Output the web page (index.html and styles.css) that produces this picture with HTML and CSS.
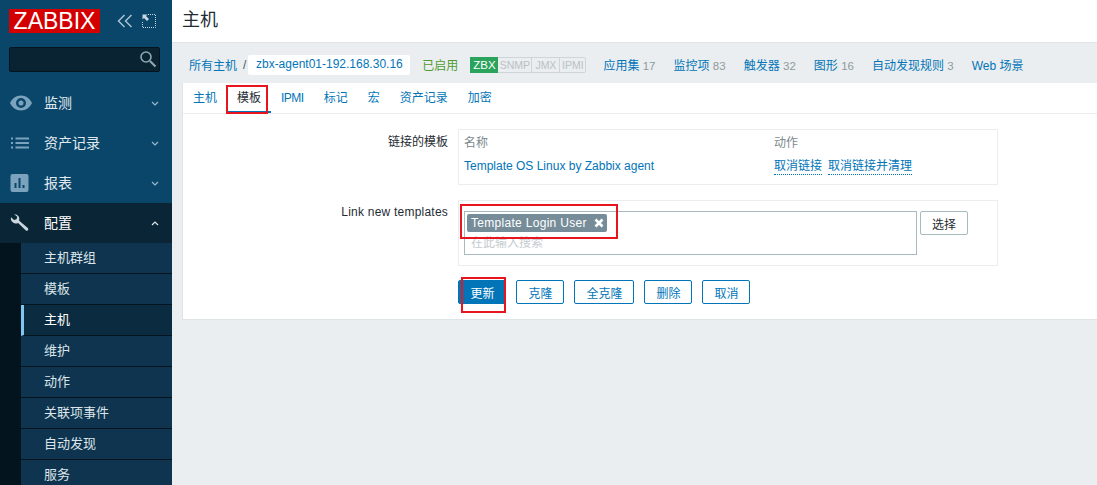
FILE: index.html
```html
<!DOCTYPE html>
<html lang="zh">
<head>
<meta charset="utf-8">
<title>主机</title>
<link rel="stylesheet" href="styles.css">
</head>
<body>
<div class="app">
  <aside class="sidebar">
    <div class="brand">
      <div class="logo">ZABBIX</div>
      <svg class="brand-icon collapse" width="16" height="14" viewBox="0 0 16 14"><path d="M7.500 1 1.500 7l6 6M14.500 1l-6 6 6 6" fill="none" stroke="#a9c1d0" stroke-width="1.500"/></svg>
      <svg class="brand-icon kiosk" width="14" height="14" viewBox="0 0 14 14"><path d="M6 .5h7.500V13.500H.5V7" fill="none" stroke="#c7d6df" stroke-width="1" stroke-dasharray="1 1"/><path d="M.5.5h5L4 2l3 3-2 2-3-3L.500 5.500z" fill="#c7d6df"/></svg>
    </div>
    <div class="search">
      <svg width="18" height="18" viewBox="0 0 18 18"><circle cx="7" cy="7" r="5" fill="none" stroke="#8fa6b3" stroke-width="1.600"/><path d="m11 11 5.500 5.500" stroke="#8fa6b3" stroke-width="2.200"/></svg>
    </div>
    <nav class="menu">
      <div class="menu-row">
        <svg class="menu-icon" width="22" height="16" viewBox="0 0 22 16"><path fill-rule="evenodd" d="M11 .5C6 .5 2 3.500 0 8c2 4.500 6 7.500 11 7.500S20 12.500 22 8C20 3.500 16 .5 11 .5zm0 2.500a5 5 0 1 1 0 10 5 5 0 0 1 0-10zm0 2.500a2.500 2.500 0 1 0 0 5 2.500 2.500 0 0 0 0-5z" fill="#7ba3bd"/></svg>
        <span class="menu-label">监测</span>
        <svg class="chev" width="8" height="5" viewBox="0 0 8 5"><path d="m1 1 3 3 3-3" fill="none" stroke="#9db8c9" stroke-width="1.200"/></svg>
      </div>
      <div class="menu-row">
        <svg class="menu-icon" width="22" height="16" viewBox="0 0 22 16"><path d="M1 2.500h2v2H1zM1 7h2v2H1zM1 11.500h2v2H1zM5.500 2.500H19v2H5.500zM5.500 7H19v2H5.500zM5.500 11.500H19v2H5.500z" fill="#7ba3bd"/></svg>
        <span class="menu-label">资产记录</span>
        <svg class="chev" width="8" height="5" viewBox="0 0 8 5"><path d="m1 1 3 3 3-3" fill="none" stroke="#9db8c9" stroke-width="1.200"/></svg>
      </div>
      <div class="menu-row">
        <svg class="menu-icon" width="22" height="18" viewBox="0 0 22 18"><path fill-rule="evenodd" d="M2 0h14a2 2 0 0 1 2 2v14a2 2 0 0 1-2 2H2a2 2 0 0 1-2-2V2a2 2 0 0 1 2-2zm2 9v5h2V9zm4-5v10h2V4zm4 7v3h2v-3z" fill="#7ba3bd" transform="translate(0.500)"/></svg>
        <span class="menu-label">报表</span>
        <svg class="chev" width="8" height="5" viewBox="0 0 8 5"><path d="m1 1 3 3 3-3" fill="none" stroke="#9db8c9" stroke-width="1.200"/></svg>
      </div>
      <div class="menu-row active">
        <svg class="menu-icon" width="22" height="18" viewBox="0 0 22 18"><path d="M4.500.2a5 5 0 0 1 4.700 6.600l8.600 7.200c1.600 1.600-.5 3.800-2.200 2.300L8.100 8.900A5 5 0 0 1 1 3.200l3.100 2.700 2.500-.7.600-2.400L4.100.2z" fill="#c9d6de"/></svg>
        <span class="menu-label">配置</span>
        <svg class="chev" width="8" height="5" viewBox="0 0 8 5"><path d="m1 4 3-3 3 3" fill="none" stroke="#dfe7ec" stroke-width="1.200"/></svg>
      </div>
      <div class="submenu">
        <div class="sub-item">主机群组</div>
        <div class="sub-item">模板</div>
        <div class="sub-item current">主机</div>
        <div class="sub-item">维护</div>
        <div class="sub-item">动作</div>
        <div class="sub-item">关联项事件</div>
        <div class="sub-item">自动发现</div>
        <div class="sub-item">服务</div>
      </div>
    </nav>
  </aside>

  <main class="main">
    <header class="page-head"><h1 class="page-title">主机</h1></header>
    <div class="content">
      <div class="crumbs">
        <a class="link">所有主机</a>
        <span class="slash">/</span>
        <span class="current-host">zbx-agent01-192.168.30.16</span>
        <span class="enabled">已启用</span>
        <span class="status-group">
          <span class="st on">ZBX</span><span class="st off snmp">SNMP</span><span class="st off jmx">JMX</span><span class="st off ipmi">IPMI</span>
        </span>
        <a class="link nav-item first">应用集 <em>17</em></a>
        <a class="link nav-item">监控项 <em>83</em></a>
        <a class="link nav-item">触发器 <em>32</em></a>
        <a class="link nav-item">图形 <em>16</em></a>
        <a class="link nav-item">自动发现规则 <em>3</em></a>
        <a class="link nav-item">Web 场景</a>
      </div>
      <section class="card">
        <div class="tabs">
          <a class="tab">主机</a>
          <a class="tab selected">模板</a>
          <a class="tab tab-narrow">IPMI</a>
          <a class="tab">标记</a>
          <a class="tab">宏</a>
          <a class="tab">资产记录</a>
          <a class="tab">加密</a>
        </div>
        <div class="form">
          <div class="form-row">
            <div class="form-label label-top">链接的模板</div>
            <div class="panel linked">
              <div class="linked-grid">
                <span class="th">名称</span><span class="th">动作</span>
                <a class="link">Template OS Linux by Zabbix agent</a>
                <span class="actions"><a class="link dotted">取消链接</a><a class="link dotted">取消链接并清理</a></span>
              </div>
            </div>
          </div>
          <div class="form-row second">
            <div class="form-label label-wide">Link new templates</div>
            <div class="panel newtpl">
              <div class="multi">
                <span class="tag">Template Login User
                  <svg class="tag-x" width="10" height="10" viewBox="0 0 10 10"><path d="m1.500 1.500 7 7m0-7-7 7" stroke="#fff" stroke-width="2.600"/></svg>
                </span>
                <div class="placeholder">在此输入搜索</div>
              </div>
              <button class="btn-select" type="button">选择</button>
            </div>
          </div>
          <div class="buttons">
            <button class="btn primary" type="button">更新</button>
            <button class="btn" type="button">克隆</button>
            <button class="btn wide" type="button">全克隆</button>
            <button class="btn" type="button">删除</button>
            <button class="btn" type="button">取消</button>
          </div>
        </div>
      </section>
    </div>
  </main>
  <div class="mark mark-tab"></div>
  <div class="mark mark-tag"></div>
  <div class="mark mark-btn"></div>
</div>
</body>
</html>
```

FILE: styles.css
```css
* { box-sizing: border-box; }
html, body { margin: 0; height: 100%; overflow: hidden; }
body {
  font-family: "Liberation Sans", "Noto Sans CJK SC", sans-serif;
  font-size: 12px;
  color: #1f2c33;
  background: #ebeef0;
}
.app { position: relative; display: flex; width: 1097px; height: 485px; overflow: hidden; }

/* sidebar */
.sidebar { width: 172px; flex: none; background: #0a466a; color: #fff; }
.brand { display: flex; align-items: center; height: 47px; padding: 9px 0 14px 9px; }
.logo {
  width: 91px; height: 24px; background: #d40000; color: #fff;
  font-size: 23px; line-height: 24px; text-align: center;
}
.brand-icon { flex: none; }
.collapse { margin-left: 17px; }
.kiosk { margin-left: 9px; }
.search {
  display: flex; align-items: center; justify-content: flex-end;
  width: 151px; height: 25px; margin: 0 0 0 9px; padding: 0 2px 1px 0;
  background: #0a2332; border: 1px solid #04141e; border-radius: 2px;
}
.menu { margin-top: 11px; }
.menu-row {
  display: flex; align-items: center;
  height: 40px; padding-left: 10px; font-size: 14px; color: #e3eaef;
}
.menu-row.active { background: #0a2535; color: #fff; }
.menu-icon { flex: none; margin-right: 12px; }
.menu-label { flex: 1; margin-top: -2px; }
.chev { flex: none; margin-right: 13px; }
.submenu { background: #04141e; padding-left: 21px; }
.sub-item {
  height: 31px; line-height: 29px; padding-left: 23px;
  background: #0e344f; color: #dce5ea; font-size: 13px;
  border-bottom: 1px solid #04141e;
}
.sub-item.current {
  background: #0a2b40; color: #fff;
  padding-left: 20px; border-left: 3px solid #7fc6f3;
}

/* main */
.main { flex: 1; min-width: 0; }
.page-head {
  height: 43px; background: #fff; border-bottom: 1px solid #dfe4e7;
  padding-left: 10px;
}
.page-title { margin: 0; font-size: 18px; line-height: 41px; font-weight: 400; color: #1f2c33; }
.content { padding-left: 10px; }
.link { color: #0275b8; text-decoration: none; }
.crumbs { display: flex; align-items: center; height: 40px; padding-left: 7px; padding-top: 3px; white-space: nowrap; }
.slash { margin-left: 6px; color: #4a5960; }
.current-host {
  display: block; width: 162px; height: 20px; margin-left: 2px; margin-top: 1px;
  background: #fff; border-radius: 2px; color: #0275b8;
  line-height: 19px; text-align: center;
}
.enabled { margin-left: 12px; color: #4f9c30; }
.status-group { display: flex; margin-left: 12px; height: 16px; margin-top: 1px; }
.st {
  display: block; height: 16px; line-height: 14px; font-size: 10.500px; text-align: center;
  border: 1px solid #ced5d9;
}
.st.on { width: 28px; font-size: 11.500px; background: #2aa45c; border-color: #2aa45c; color: #fff; }
.st.off { color: #b9c1c5; border-left: 0; }
.snmp { width: 34px; }
.jmx { width: 28px; }
.ipmi { width: 26px; border-radius: 0 2px 2px 0; }
.nav-item { margin-left: 18px; }
.nav-item.first { margin-left: 17px; }
.nav-item em { font-style: normal; color: #8e9a9f; font-size: 11.500px; }

.card { background: #fff; border: 1px solid #dfe4e7; border-right: 0; border-top: 0; height: 237px; }
.tabs { display: flex; height: 31px; border-bottom: 1px solid #ebeef0; }
.tab {
  display: block; padding: 0 10px; height: 30px; line-height: 31px;
  color: #0275b8; white-space: nowrap;
}
.tab-narrow { padding-right: 10px; letter-spacing: -0.5px; }
.tab.selected { color: #1f2c33; border-bottom: 2px solid #0275b8; }
.form { padding-top: 15px; }
.form-row { display: flex; }
.form-row.second { margin-top: 15px; }
.form-label { width: 265px; text-align: right; color: #1f2c33; white-space: nowrap; }
.label-top { padding-top: 3px; }
.label-wide { padding-top: 5px; letter-spacing: 0.22px; }
.panel { margin-left: 10px; width: 540px; border: 1px solid #ebeef0; }
.linked { height: 56px; padding: 6px 5px 0; }
.linked-grid { display: grid; grid-template-columns: 310px 1fr; row-gap: 8px; line-height: 15px; }
.th { color: #7c888e; }
.actions { display: flex; gap: 6px; }
.dotted { border-bottom: 1px dotted #0275b8; line-height: 15px; }
.newtpl { display: flex; height: 66px; padding: 10px 5px 0; }
.multi { width: 453px; height: 44px; border: 1px solid #a9babf; padding: 2px; }
.tag {
  display: inline-flex; align-items: center; height: 18px; width: 140px;
  background: #768d99; color: #fff; border-radius: 2px; padding-left: 4px;
  letter-spacing: 0.3px;
}
.tag-x { margin-left: 7px; }
.placeholder { margin: 3px 0 0 4px; color: #c4ccd0; line-height: 17px; }
.btn-select {
  width: 48px; height: 24px; margin-left: 3px; padding: 0;
  background: #fff; border: 1px solid #a9babf; border-radius: 2px;
  font: inherit; color: #1f2c33;
}
.buttons { display: flex; gap: 10px; margin: 14px 0 0 275px; }
.btn {
  width: 48px; height: 24px; padding: 0 0 0 1px;
  background: #fff; border: 1px solid #0275b8; border-radius: 2px;
  font: inherit; color: #0275b8;
}
.btn.wide { width: 60px; }
.btn.primary { background: #0275b8; color: #fff; }

/* red annotation boxes drawn over the screenshot */
.mark { position: absolute; border: 2px solid #e8141e; pointer-events: none; }
.mark-tab { left: 226px; top: 85px; width: 42px; height: 29px; }
.mark-tag { left: 460px; top: 204px; width: 158px; height: 35px; }
.mark-btn { left: 461px; top: 277px; width: 45px; height: 36px; }
```
